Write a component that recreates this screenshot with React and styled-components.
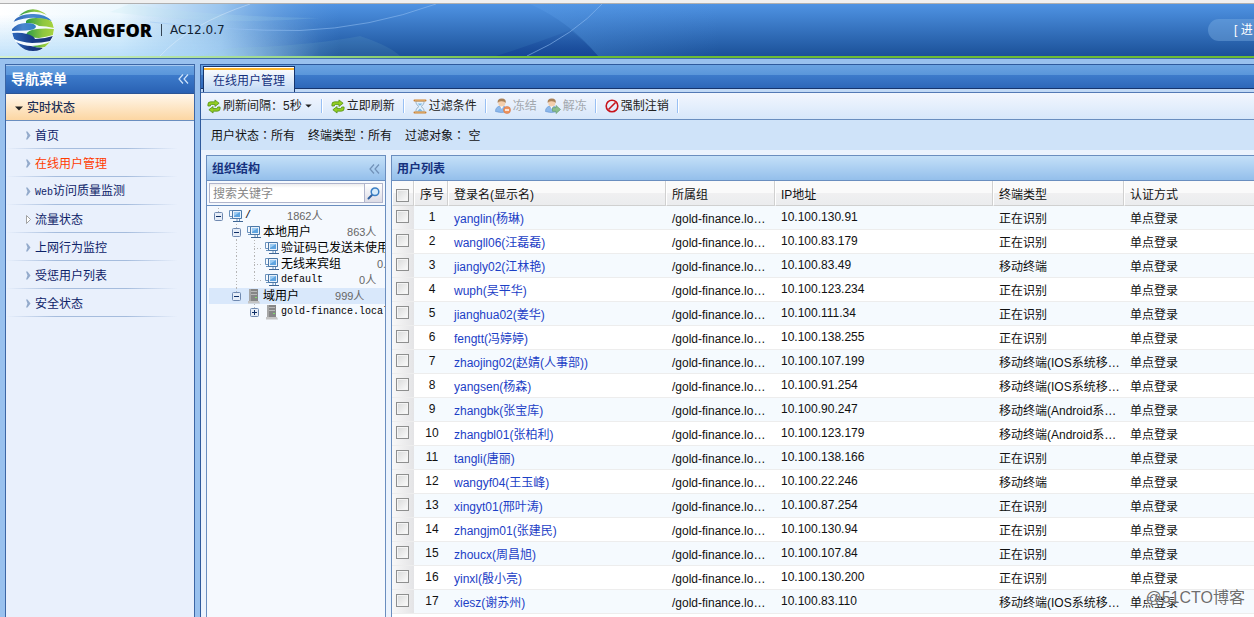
import React from "react";
import styled, { createGlobalStyle, css } from "styled-components";

const sans = `"Liberation Sans", "Noto Sans CJK SC", sans-serif`;
const navy = "#15317e";
const line = "#6a8ebf";

const GlobalStyle = createGlobalStyle`
  * {
    box-sizing: border-box;
  }
  body {
    margin: 0;
    background: #99c1ee;
    color: #111;
    font-family: ${sans};
    font-size: 12px;
    line-height: 16px;
  }
  button, input {
    font: inherit;
    color: inherit;
  }
`;

const Page = styled.div`
  height: 100vh;
  display: flex;
  flex-direction: column;
  overflow: hidden;
  position: relative;
`;

const Header = styled.header`
  flex: none;
  display: flex;
  flex-direction: column;
  border-top: 3px solid #f0f0f0;
  border-bottom: 1px solid #3e6cae;
`;

const Banner = styled.div`
  height: 53px;
  display: flex;
  align-items: center;
  position: relative;
  overflow: hidden;
  border-top: 1px solid #b0b0b0;
  background: linear-gradient(#4f93e3, #1b5199);
`;

const GreenLine = styled.div`
  height: 2px;
  background: linear-gradient(90deg, #d5f0cc, #9ad888 300px, #6cbc34 560px);
`;

const Swoosh = styled.svg`
  position: absolute;
  left: 0;
  top: 0;
`;

const Brand = styled.div`
  display: flex;
  align-items: center;
  position: relative;
  padding-left: 12px;
`;

const BrandName = styled.span`
  margin-left: 10px;
  padding-right: 9px;
  font: 800 18px/20px "Open Sans", sans-serif;
  color: #000;
`;

const Version = styled.span`
  border-left: 1px solid #345;
  padding-left: 8px;
  font: 12px/12px "DejaVu Sans", sans-serif;
  color: #123;
`;

const Wizard = styled.button`
  margin-left: auto;
  position: relative;
  height: 22px;
  width: 46px;
  padding: 0 0 0 26px;
  border: 0;
  border-radius: 11px 0 0 11px;
  background: rgba(130, 180, 230, 0.4);
  color: #fff;
  text-align: left;
  white-space: nowrap;
  overflow: hidden;
`;

const Body = styled.div`
  flex: 1;
  min-height: 0;
  display: grid;
  grid-template-columns: 190px 1fr;
  gap: 5px;
  padding: 5px 0 0 5px;
`;

const Sidebar = styled.nav`
  border: 1px solid #3c66a5;
  border-bottom: 0;
  background: #e9f0fc;
`;

const barBlue = css`
  background: linear-gradient(#6aa3e2, #5a96da 10px, #3d7bcb 10px, #2961b3);
`;

const SideTitle = styled.div`
  ${barBlue}
  display: flex;
  align-items: center;
  justify-content: space-between;
  height: 29px;
  padding: 0 5px;
  border-bottom: 1px solid #2b5596;
  box-shadow: inset 0 1px #a5c8f0;
  color: #fff;
  font-size: 14px;
  font-weight: 700;
`;

const Collapse = styled.button`
  display: flex;
  padding: 0;
  border: 0;
  background: none;
  color: ${(p) => p.$color};
`;

const Group = styled.button`
  display: flex;
  align-items: center;
  gap: 4px;
  width: 100%;
  height: 27px;
  padding: 2px 9px 0;
  border: 0;
  border-bottom: 1px solid ${line};
  background: linear-gradient(#fff7ec, #fcd6a2);
  color: #1d2f55;
  font-weight: 500;
`;

const NavList = styled.ul`
  margin: 0;
  padding: 0;
  list-style: none;
`;

const NavItem = styled.a`
  display: flex;
  align-items: center;
  gap: 4px;
  height: 28px;
  padding: 1px 0 0 20px;
  color: ${(p) => (p.$active ? "#ff3c00" : "#0d2268")};
  text-decoration: none;
  background: linear-gradient(90deg, transparent, #a5bcdd 50px, #a5bcdd 120px, transparent 172px)
    left bottom / 100% 1px no-repeat;
`;

const Mono = styled.span`
  font-family: "Liberation Mono", monospace;
  font-size: 10px;
`;

const Main = styled.main`
  display: flex;
  flex-direction: column;
  min-width: 0;
  min-height: 0;
  border: solid #2f5a9c;
  border-width: 1px 0 0 1px;
  background: #ebf3fd;
`;

const TabStrip = styled.div`
  ${barBlue}
  flex: none;
  display: flex;
  align-items: flex-start;
  height: 28px;
  padding: 1px 2px 0;
  border-bottom: 1px solid #5379b5;
  box-shadow: inset 0 -3px #c0d8f5, inset 0 -4px #16356d;
`;

const Tab = styled.button`
  height: 26px;
  padding: 2px 9px 0;
  border: 1px solid #16356d;
  border-bottom: 0;
  background: linear-gradient(#fff, #c0d8f5);
  box-shadow: inset 0 1px #fff, inset 0 3px #fbb52c;
  color: ${navy};
`;

const Toolbar = styled.div`
  flex: none;
  display: flex;
  align-items: center;
  gap: 8px;
  height: 27px;
  padding: 0 6px;
  border-bottom: 1px solid ${line};
  background: linear-gradient(#f2f6fe, #d7e7fa);
`;

const ToolButton = styled.button`
  display: flex;
  align-items: center;
  gap: 2px;
  padding: 0;
  border: 0;
  background: none;
  color: #222;
  white-space: nowrap;

  &:disabled {
    color: #a3a8ae;
  }
`;

const Separator = styled.span`
  width: 2px;
  height: 14px;
  border-left: 1px solid #98c0f4;
  border-right: 1px solid #fff;
`;

const FilterBar = styled.div`
  flex: none;
  display: flex;
  align-items: center;
  gap: 13px;
  height: 30px;
  padding: 1px 10px 0;
  background: #cfe3f9;
`;

const Colon = styled.span`
  font-family: "Noto Sans CJK TC", sans-serif;
`;

const Panels = styled.div`
  flex: 1;
  min-height: 0;
  display: grid;
  grid-template-columns: 180px 1fr;
  gap: 5px;
  padding: 5px 0 0 5px;
`;

const Panel = styled.section`
  min-width: 0;
  overflow: hidden;
  border: 1px solid ${line};
  border-bottom: 0;
  background: #f5f9fe;
`;

const UserPanel = styled(Panel)`
  border-right: 0;
  background: #fff;
`;

const PanelTitle = styled.div`
  display: flex;
  align-items: center;
  justify-content: space-between;
  height: 25px;
  padding: 1px 5px 0;
  border-bottom: 1px solid ${line};
  background: linear-gradient(#c4e0f8, #94bfeb);
  color: ${navy};
  font-weight: 700;
`;

const SearchRow = styled.div`
  height: 25px;
  padding: 2px 2px 3px;
  border-bottom: 1px solid ${line};
`;

const SearchBox = styled.div`
  display: flex;
  height: 20px;
  border: 1px solid #b0b5cc;
  background: #fff;
`;

const SearchInput = styled.input`
  flex: 1;
  min-width: 0;
  padding: 2px 3px 0;
  border: 0;
  outline: 0;
  background: linear-gradient(#ededed, #fff 4px);

  &::placeholder {
    color: #888;
  }
`;

const SearchButton = styled.button`
  display: flex;
  align-items: center;
  justify-content: center;
  width: 18px;
  padding: 0;
  border: 0;
  border-left: 1px solid #b0b5cc;
  background: linear-gradient(#fff, #dcdce6);
`;

const Tree = styled.ul`
  margin: 0;
  padding: 2px 0 0 2px;
  list-style: none;
`;

const TreeRow = styled.li`
  display: flex;
  align-items: center;
  height: 16px;
  line-height: 18px;
  white-space: nowrap;
  color: #000;
  background: ${(p) => (p.$selected ? "#d9e8fb" : "none")};
`;

const dots = "repeating-linear-gradient(#b5b5b5 0 1px, transparent 1px 3px)";
const stub = "repeating-linear-gradient(90deg, #b5b5b5 0 1px, transparent 1px 3px)";

const guides = {
  none: "none",
  full: `${dots} 9px 0 / 1px 100% no-repeat`,
  top: `${dots} 9px 0 / 1px 50% no-repeat`,
  leaf: `${dots} 9px 0 / 1px 100% no-repeat, ${stub} 9px 8px / 9px 1px no-repeat`,
  last: `${dots} 9px 0 / 1px 50% no-repeat, ${stub} 9px 8px / 9px 1px no-repeat`,
};

const TreeCell = styled.span`
  flex: none;
  display: flex;
  align-items: center;
  justify-content: center;
  width: 18px;
  height: 16px;
  background: ${(p) => guides[p.$guide || "none"]};
`;

const Count = styled.span`
  margin-left: 36px;
  font-size: 11px;
  color: #666;
`;

const Table = styled.table`
  width: 100%;
  table-layout: fixed;
  border-collapse: separate;
  border-spacing: 0;
`;

const Th = styled.th`
  height: 25px;
  padding: 3px 0 0 5px;
  border-right: 1px solid #d0d0d0;
  border-bottom: 1px solid #d0d0d0;
  border-left: 1px solid #fff;
  background: linear-gradient(#fafafa 50%, #f0f0f1 50%, #ebecee);
  font-weight: 400;
  text-align: left;
  white-space: nowrap;

  &:last-child {
    border-right: 0;
  }
`;

const Td = styled.td`
  height: 24px;
  padding: 2px 0 0 6px;
  border-bottom: 1px solid #ededed;
  white-space: nowrap;
  overflow: hidden;
`;

const NumberTd = styled(Td)`
  padding: 0 0 2px 2px;
  text-align: center;
`;

const IpTd = styled(Td)`
  padding: 0 0 2px 6px;
`;

const CheckTh = styled(Th)`
  padding: 4px 0 0 3px;
`;

const CheckTd = styled(Td)`
  padding: 0 0 2px 4px;
  background: linear-gradient(90deg, #f8f8f8, #e4e4e6);
`;

const Row = styled.tr`
  background: #fff;

  &:nth-child(odd) {
    background: #f5fafe;
  }
`;

const Check = styled.input`
  appearance: none;
  display: block;
  width: 13px;
  height: 13px;
  margin: 0;
  border: 1px solid #8e8f8f;
  background: linear-gradient(135deg, #d8d9d9, #fcfcfc);
  box-shadow: inset 0 0 0 1px #f4f4f4;
`;

const UserLink = styled.a`
  color: #1c40c6;
  text-decoration: none;
`;

const Watermark = styled.span`
  position: absolute;
  right: 9px;
  bottom: 7px;
  font-size: 16px;
  line-height: 24px;
  color: rgba(70, 70, 70, 0.8);
  text-shadow: 0 0 1px #fff, 0 0 1px #fff;
`;

const Logo = () => (
  <svg width="42" height="42" viewBox="0 0 42 42" aria-hidden="true">
    <defs>
      <linearGradient id="blue" x1="0" x2="1">
        <stop offset="0" stopColor="#2b62b4" />
        <stop offset="0.45" stopColor="#4a86cf" />
        <stop offset="1" stopColor="#2f7fc4" />
      </linearGradient>
      <linearGradient id="deep" x1="0" x2="1">
        <stop offset="0" stopColor="#2d68bb" />
        <stop offset="0.5" stopColor="#173a85" />
        <stop offset="1" stopColor="#1c3576" />
      </linearGradient>
      <linearGradient id="green" x1="0" x2="1">
        <stop offset="0" stopColor="#2a9a45" />
        <stop offset="0.6" stopColor="#8dc63f" />
        <stop offset="1" stopColor="#a8d33f" />
      </linearGradient>
      <clipPath id="ball">
        <circle cx="21" cy="21" r="21" />
      </clipPath>
    </defs>
    <g clipPath="url(#ball)">
      <rect width="42" height="42" fill="#f4fafe" />
      <path d="M9 5Q21-5 35 6Q27 2 19 3Q12 4 7 7Z" fill="url(#green)" />
      <path d="M2 11Q10 4 22 5Q33 5 40 12Q32 10 25 9Q14 8 1 13Z" fill="url(#blue)" />
      <path d="M14 12Q16 9 24 9Q36 9 40 13L42 19Q34 17 27 17Q23 14 14 14Z" fill="url(#green)" />
      <path d="M0 20Q5 14 14 14Q24 14 24 18Q23 21 14 21.500Q6 21.500 0 22Z" fill="url(#blue)" />
      <path d="M14 26Q15 21 25 20Q34 19 42 20L41 26Q34 28 27 29Q19 29 14 26Z" fill="url(#green)" />
      <path d="M0 24Q8 23 15 25Q22 27 23 30Q32 30 41 27L38 32Q30 34 20 34Q9 33 2 30Z" fill="url(#deep)" />
      <path d="M20 37Q31 36 38 33L33 38Q26 40 20 37Z" fill="url(#green)" />
      <path d="M4 33Q12 37 19 37Q25 39 31 39L27 42H14Q8 38 4 33Z" fill="url(#deep)" />
    </g>
  </svg>
);

const HeaderArt = () => (
  <Swoosh width="720" height="52" viewBox="0 0 720 52" aria-hidden="true">
    <defs>
      <linearGradient id="fade" x1="0" x2="1">
        <stop offset="0" stopColor="#fff" />
        <stop offset="0.35" stopColor="#ecf8fe" />
        <stop offset="0.65" stopColor="#a3cbf0" stopOpacity="0.9" />
        <stop offset="1" stopColor="#5a98de" stopOpacity="0" />
      </linearGradient>
      <linearGradient id="tint" x1="0" y1="0" x2="0" y2="1">
        <stop offset="0.2" stopColor="#a8d6f8" stopOpacity="0" />
        <stop offset="1" stopColor="#a8d6f8" stopOpacity="0.7" />
      </linearGradient>
      <linearGradient id="tintEdge" x1="0" x2="1">
        <stop offset="0.6" stopColor="#fff" />
        <stop offset="1" stopColor="#000" />
      </linearGradient>
      <mask id="tintMask">
        <path d="M0 0H320V52H0Z" fill="url(#tintEdge)" />
      </mask>
      <linearGradient id="glow" x1="0" x2="1">
        <stop offset="0" stopColor="#5c9ee8" stopOpacity="0.35" />
        <stop offset="1" stopColor="#5c9ee8" stopOpacity="0" />
      </linearGradient>
      <linearGradient id="navyFade" x1="0" y1="0" x2="0" y2="1">
        <stop offset="0" stopColor="#17459a" stopOpacity="0.1" />
        <stop offset="1" stopColor="#123f94" stopOpacity="0.6" />
      </linearGradient>
    </defs>
    <path d="M0 0H340V52H0Z" fill="url(#fade)" />
    <path d="M0 0H320V52H0Z" fill="url(#tint)" mask="url(#tintMask)" />
    <path d="M130 0Q200 12 320 14Q220 22 110 8Z" fill="#b8e4e8" opacity="0.15" />
    <path d="M230 44Q310 42 360 32Q390 42 400 52H200Z" fill="#9bd5cf" opacity="0.1" />
    <path d="M530 0Q570 18 598 52H720V0Z" fill="url(#glow)" />
    <path d="M496 52Q540 38 570 26Q586 38 598 52Z" fill="url(#navyFade)" />
    <path d="M150 18Q230 27 300 26.500Q370 24 436 0" fill="none" stroke="#9cc6f5" opacity="0.5" />
    <path d="M527 52Q575 30 602 0" fill="none" stroke="#8fbdf2" opacity="0.6" />
    <path d="M160 52Q190 20 250 0" fill="none" stroke="#fff" opacity="0.3" />
  </Swoosh>
);

const DoubleChevron = () => (
  <svg width="11" height="10" viewBox="0 0 11 10" fill="none" stroke="currentColor" strokeWidth="1.200" aria-hidden="true">
    <path d="M5 0.500L1 5L5 9.500M10 0.500L6 5L10 9.500" />
  </svg>
);

const CaretDown = ({ width = 8 }) => (
  <svg width={width} height={width === 8 ? 5 : 4} viewBox="0 0 8 5" aria-hidden="true">
    <path d="M0 0.500H8L4 4.500Z" fill="#222" />
  </svg>
);

const NavArrow = ({ hollow }) => (
  <svg width="5" height="9" viewBox="0 0 5 9" aria-hidden="true">
    {hollow ? (
      <path d="M0.500 0.500V8.500L4.500 4.500Z" fill="#fff" stroke="#999" strokeWidth="0.900" />
    ) : (
      <path d="M0 0.500H1.500L4.500 4.500L1.500 8.500H0L1.500 4.500Z" fill="#93aacb" />
    )}
  </svg>
);

const RefreshIcon = () => (
  <svg width="14" height="15" viewBox="0 0 15 15" stroke="#4c8a10" strokeWidth="0.800" aria-hidden="true">
    <path d="M1 7V5Q1 2.500 4 2.500H8.500V0.500L13 4L8.500 7.500V5.300H5Q3.500 5.300 3.500 7Z" fill="#94cf22" />
    <path d="M14 8V10Q14 12.500 11 12.500H6.500V14.500L2 11L6.500 7.500V9.700H10Q11.500 9.700 11.500 8Z" fill="#94cf22" />
  </svg>
);

const HourglassIcon = () => (
  <svg width="14" height="15" viewBox="0 0 14 15" aria-hidden="true">
    <path d="M3 2H11V4Q10.500 6 8 7.500Q10.500 9 11 11V13H3V11Q3.500 9 6 7.500Q3.500 6 3 4Z" fill="#e4f1fb" stroke="#9fb6c8" />
    <path d="M4.500 4.500H9.500L7 6.800ZM3.800 12.500L7 9.500L10.200 12.500Z" fill="#7cb9e6" />
    <path d="M1.500 1.500H12.500M1.500 13.500H12.500" stroke="#c98335" strokeWidth="2" strokeLinecap="round" />
    <path d="M2 1.200H12M2 13.200H12" stroke="#efc48c" strokeWidth="0.700" />
  </svg>
);

const UserIcon = ({ action }) => (
  <svg width="16" height="16" viewBox="0 0 16 16" aria-hidden="true">
    <path d="M0.500 13.500Q0.500 8 6.500 8Q12 8 12.500 13.500Q6 15.500 0.500 13.500Z" fill="#8db9ec" stroke="#6d9bd6" strokeWidth="0.700" />
    <path d="M5 8H8.500L6.800 11Z" fill="#fff" />
    <circle cx="6.800" cy="5" r="3.600" fill="#f4cfad" />
    <path d="M2.700 5Q2 0.500 6.800 0.500Q11.500 0.500 10.700 5Q9.500 3 6 3.300Q3.500 3.500 2.700 5Z" fill="#a98158" />
    {action === "freeze" ? (
      <>
        <circle cx="12" cy="12" r="3.500" fill="#ee935f" stroke="#d67744" strokeWidth="0.600" />
        <path d="M10 12H14" stroke="#fff" strokeWidth="1.500" />
      </>
    ) : (
      <path d="M7.500 9.700H11V7.500L15.500 11.500L11 15.500V13.300H7.500Z" fill="#8bbf8c" stroke="#6a9d72" strokeWidth="0.700" />
    )}
  </svg>
);

const BanIcon = () => (
  <svg width="14" height="14" viewBox="0 0 14 14" fill="none" stroke="#c8141c" aria-hidden="true">
    <circle cx="7" cy="7" r="5.800" strokeWidth="1.600" />
    <path d="M3.500 10.500L10.500 3.500" strokeWidth="1.600" />
  </svg>
);

const MagnifierIcon = () => (
  <svg width="13" height="13" viewBox="0 0 13 13" fill="none" aria-hidden="true">
    <path d="M1.500 11.500L5 8" stroke="#2f5f9f" strokeWidth="2" strokeLinecap="round" />
    <circle cx="8" cy="4.800" r="3.800" fill="#d8ecfb" stroke="#3c7fc4" strokeWidth="1.500" />
  </svg>
);

const Expander = ({ open }) => (
  <svg width="9" height="9" viewBox="0 0 9 9" aria-hidden="true">
    <rect x="0.500" y="0.500" width="8" height="8" rx="1" fill="#e6edf7" stroke="#6f89b0" />
    <path d={open ? "M2 4.500H7" : "M2 4.500H7M4.500 2V7"} stroke="#0f2f66" />
  </svg>
);

const ComputersIcon = () => (
  <svg width="14" height="14" viewBox="0 0 14 14" fill="none" aria-hidden="true">
    <path d="M4 1.500H0.500V7.500H3M1 9.500H4" stroke="#6c93bd" />
    <path d="M3.500 1.500H12.500V9.500H3.500Z" fill="#e8f1fa" stroke="#4b78a8" />
    <path d="M5 3H11V8H5Z" fill="#5ea4e0" />
    <path d="M5 3H11L5 7Z" fill="#9ccbf2" />
    <path d="M8 10V12M10.500 10V12" stroke="#6c93bd" />
    <path d="M4 12.500H14" stroke="#3d6594" />
  </svg>
);

const ServerIcon = () => (
  <svg width="12" height="15" viewBox="0 0 12 15" aria-hidden="true">
    <rect x="1" y="0" width="9" height="12" fill="#868686" />
    <rect x="1" y="0" width="2" height="12" fill="#a6a6a6" />
    <path d="M3 2.500H9M3 5.500H9" stroke="#b8b8b8" />
    <rect x="7" y="8" width="2" height="1" fill="#7fdc6a" />
    <path d="M0 12H11L12 14.500H0Z" fill="#c4c4c4" />
  </svg>
);

const navItems = [
  { label: "首页" },
  { label: "在线用户管理", active: true },
  { latin: "Web", label: "访问质量监测" },
  { label: "流量状态", hollow: true },
  { label: "上网行为监控" },
  { label: "受惩用户列表" },
  { label: "安全状态" },
];

const treeRows = [
  { indent: [], guide: "top", open: true, icon: "pc", latin: "/", count: "1862人" },
  { indent: ["none"], guide: "full", open: true, icon: "pc", label: "本地用户", count: "863人" },
  { indent: ["none", "full"], guide: "leaf", icon: "pc", label: "验证码已发送未使用" },
  { indent: ["none", "full"], guide: "leaf", icon: "pc", label: "无线来宾组", count: "0人" },
  { indent: ["none", "full"], guide: "last", icon: "pc", latin: "default", count: "0人" },
  { indent: ["none"], guide: "top", open: true, icon: "server", label: "域用户", count: "999人", selected: true },
  { indent: ["none", "none"], guide: "top", open: false, icon: "server", latin: "gold-finance.local" },
];

const ios = "移动终端(IOS系统移…";
const android = "移动终端(Android系…";

const users = [
  ["yanglin(杨琳)", "10.100.130.91", "正在识别"],
  ["wangll06(汪磊磊)", "10.100.83.179", "正在识别"],
  ["jiangly02(江林艳)", "10.100.83.49", "移动终端"],
  ["wuph(吴平华)", "10.100.123.234", "正在识别"],
  ["jianghua02(姜华)", "10.100.111.34", "正在识别"],
  ["fengtt(冯婷婷)", "10.100.138.255", "正在识别"],
  ["zhaojing02(赵婧(人事部))", "10.100.107.199", ios],
  ["yangsen(杨森)", "10.100.91.254", ios],
  ["zhangbk(张宝库)", "10.100.90.247", android],
  ["zhangbl01(张柏利)", "10.100.123.179", android],
  ["tangli(唐丽)", "10.100.138.166", "正在识别"],
  ["wangyf04(王玉峰)", "10.100.22.246", "移动终端"],
  ["xingyt01(邢叶涛)", "10.100.87.254", "正在识别"],
  ["zhangjm01(张建民)", "10.100.130.94", "正在识别"],
  ["zhoucx(周昌旭)", "10.100.107.84", "正在识别"],
  ["yinxl(殷小亮)", "10.100.130.200", "正在识别"],
  ["xiesz(谢苏州)", "10.100.83.110", ios],
];

const columns = ["登录名(显示名)", "所属组", "IP地址", "终端类型", "认证方式"];

const App = () => {
  return (
    <Page>
      <GlobalStyle />
      <Header>
        <Banner>
          <HeaderArt />
          <Brand>
            <Logo />
            <BrandName>SANGFOR</BrandName>
            <Version>AC12.0.7</Version>
          </Brand>
          <Wizard>[ 进</Wizard>
        </Banner>
        <GreenLine />
      </Header>
      <Body>
        <Sidebar>
          <SideTitle>
            导航菜单
            <Collapse $color="#cfe4fb" aria-label="收起">
              <DoubleChevron />
            </Collapse>
          </SideTitle>
          <Group>
            <CaretDown />
            实时状态
          </Group>
          <NavList>
            {navItems.map((item) => (
              <li key={item.label}>
                <NavItem href="#" $active={item.active}>
                  <NavArrow hollow={item.hollow} />
                  <span>
                    {item.latin && <Mono>{item.latin}</Mono>}
                    {item.label}
                  </span>
                </NavItem>
              </li>
            ))}
          </NavList>
        </Sidebar>
        <Main>
          <TabStrip>
            <Tab>在线用户管理</Tab>
          </TabStrip>
          <Toolbar>
            <ToolButton>
              <RefreshIcon />
              刷新间隔：5秒
              <CaretDown width={9} />
            </ToolButton>
            <Separator />
            <ToolButton>
              <RefreshIcon />
              立即刷新
            </ToolButton>
            <Separator />
            <ToolButton>
              <HourglassIcon />
              过滤条件
            </ToolButton>
            <Separator />
            <ToolButton disabled>
              <UserIcon action="freeze" />
              冻结
            </ToolButton>
            <ToolButton disabled>
              <UserIcon action="unfreeze" />
              解冻
            </ToolButton>
            <Separator />
            <ToolButton>
              <BanIcon />
              强制注销
            </ToolButton>
            <Separator />
          </Toolbar>
          <FilterBar>
            <span>
              用户状态<Colon>：</Colon>所有
            </span>
            <span>
              终端类型<Colon>：</Colon>所有
            </span>
            <span>
              过滤对象<Colon>：</Colon> 空
            </span>
          </FilterBar>
          <Panels>
            <Panel>
              <PanelTitle>
                组织结构
                <Collapse $color="#7191b8" aria-label="收起">
                  <DoubleChevron />
                </Collapse>
              </PanelTitle>
              <SearchRow>
                <SearchBox>
                  <SearchInput placeholder="搜索关键字" aria-label="搜索关键字" />
                  <SearchButton aria-label="搜索">
                    <MagnifierIcon />
                  </SearchButton>
                </SearchBox>
              </SearchRow>
              <Tree>
                {treeRows.map((row) => (
                  <TreeRow key={row.label || row.latin} $selected={row.selected}>
                    {row.indent.map((guide, i) => (
                      <TreeCell key={i} $guide={guide} />
                    ))}
                    <TreeCell $guide={row.guide}>
                      {row.open !== undefined && <Expander open={row.open} />}
                    </TreeCell>
                    <TreeCell>{row.icon === "pc" ? <ComputersIcon /> : <ServerIcon />}</TreeCell>
                    {row.latin ? <Mono>{row.latin}</Mono> : <span>{row.label}</span>}
                    {row.count && <Count>{row.count}</Count>}
                  </TreeRow>
                ))}
              </Tree>
            </Panel>
            <UserPanel>
              <PanelTitle>用户列表</PanelTitle>
              <Table>
                <colgroup>
                  <col width="22" />
                  <col width="34" />
                  <col width="218" />
                  <col width="109" />
                  <col width="218" />
                  <col width="131" />
                  <col />
                </colgroup>
                <thead>
                  <tr>
                    <CheckTh>
                      <Check type="checkbox" aria-label="全选" />
                    </CheckTh>
                    <Th>序号</Th>
                    {columns.map((name) => (
                      <Th key={name}>{name}</Th>
                    ))}
                  </tr>
                </thead>
                <tbody>
                  {users.map(([name, ip, type], i) => (
                    <Row key={name}>
                      <CheckTd>
                        <Check type="checkbox" aria-label={name} />
                      </CheckTd>
                      <NumberTd>{i + 1}</NumberTd>
                      <Td>
                        <UserLink href="#">{name}</UserLink>
                      </Td>
                      <Td>/gold-finance.lo…</Td>
                      <IpTd>{ip}</IpTd>
                      <Td>{type}</Td>
                      <Td>单点登录</Td>
                    </Row>
                  ))}
                </tbody>
              </Table>
            </UserPanel>
          </Panels>
        </Main>
      </Body>
      <Watermark>@51CTO博客</Watermark>
    </Page>
  );
};

export default App;
